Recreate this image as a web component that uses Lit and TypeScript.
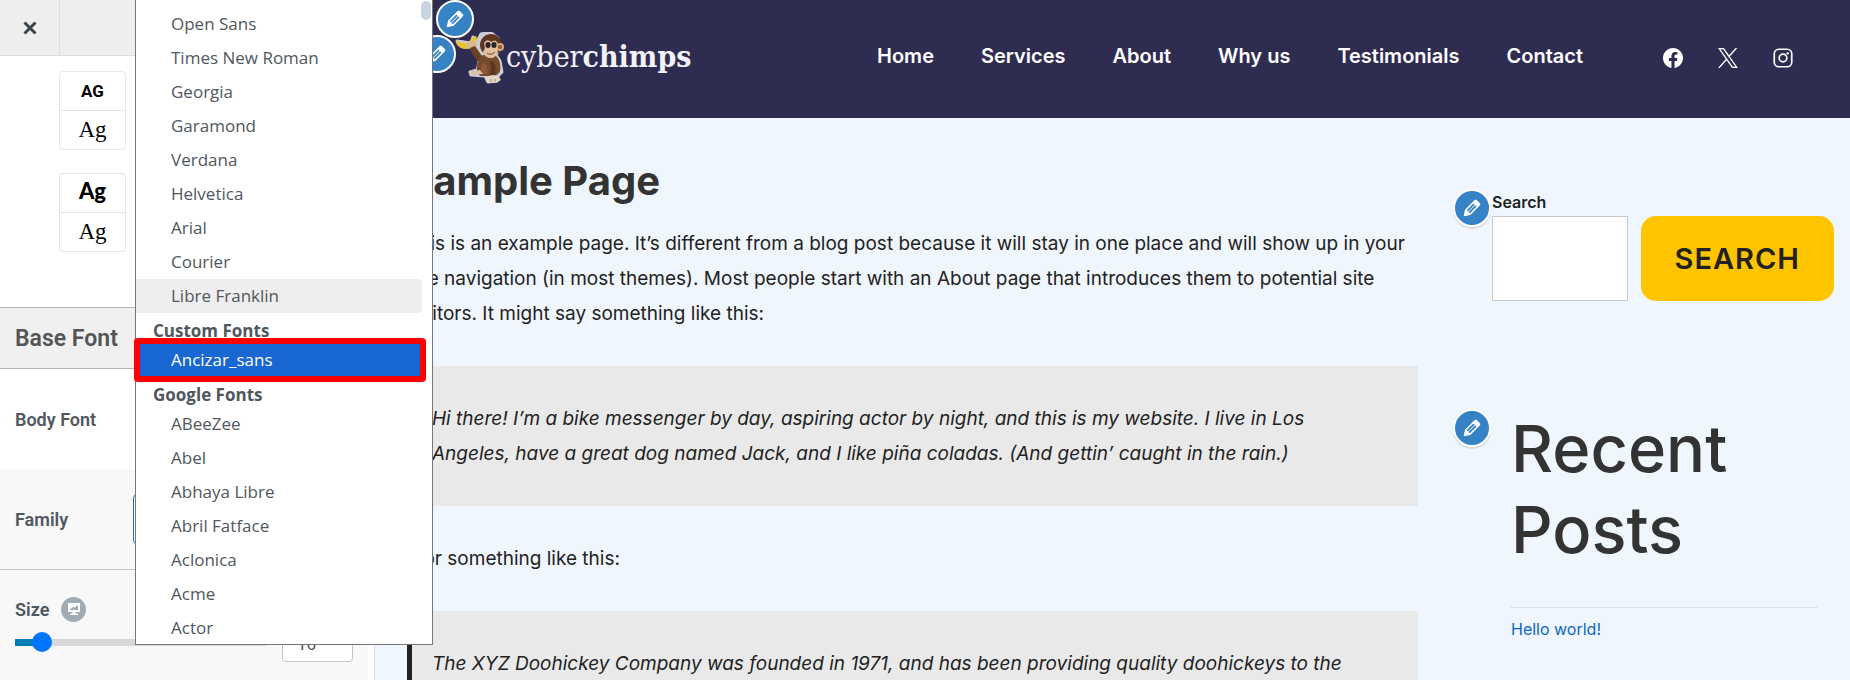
import { LitElement, html, css, svg } from "lit";
import { customElement, property, state } from "lit/decorators.js";

const SYSTEM_FONTS = ["Open Sans", "Times New Roman", "Georgia", "Garamond", "Verdana", "Helvetica", "Arial", "Courier", "Libre Franklin"];
const CUSTOM_FONTS = ["Ancizar_sans"];
const GOOGLE_FONTS = ["ABeeZee", "Abel", "Abhaya Libre", "Abril Fatface", "Aclonica", "Acme", "Actor"];
const CURRENT_FONT = "Libre Franklin";
const MENU = ["Home", "Services", "About", "Why us", "Testimonials", "Contact"];

const SOCIAL = [
  {
    name: "Facebook",
    shape: svg`<path d="M24 12.073c0-6.627-5.373-12-12-12s-12 5.373-12 12c0 5.99 4.388 10.954 10.125 11.854v-8.385H7.078v-3.47h3.047V9.43c0-3.007 1.792-4.669 4.533-4.669 1.312 0 2.686.235 2.686.235v2.953H15.83c-1.491 0-1.956.925-1.956 1.874v2.25h3.328l-.532 3.47h-2.796v8.385C19.612 23.027 24 18.062 24 12.073z"/>`,
  },
  {
    name: "X",
    shape: svg`<path d="M14.258 10.152 23.176 0h-2.113l-7.747 8.813L7.133 0H0l9.352 13.328L0 23.973h2.113l8.176-9.309 6.531 9.309h7.133zm-2.895 3.293-.949-1.328L2.875 1.56h3.246l6.086 8.523.945 1.328 7.91 11.078h-3.246z"/>`,
  },
  {
    name: "Instagram",
    shape: svg`<g fill="none" stroke="currentColor" stroke-width="2"><rect x="1.5" y="1.5" width="21" height="21" rx="5.5"/><circle cx="12" cy="12" r="4.6"/></g><circle cx="17.6" cy="6.4" r="1.4"/>`,
  },
];

@customElement("edit-shortcut")
class EditShortcut extends LitElement {
  @property() label = "";

  static styles = css`
    :host { display: block; }
    .shortcut {
      display: grid;
      place-items: center;
      box-sizing: border-box;
      width: 38px;
      height: 38px;
      padding: 0;
      border: 2px solid #fff;
      border-radius: 50%;
      background: #3582c4;
      color: #fff;
      box-shadow: 0 2px 1px rgba(46, 68, 83, 0.15);
      cursor: pointer;
    }
    .pen { display: block; width: 24px; height: 24px; fill: currentColor; }
  `;

  render() {
    return html`<button class="shortcut" type="button" aria-label=${this.label}>
      <svg class="pen" viewBox="0 0 20 20" aria-hidden="true">
        <path d="M13.89 3.39l2.71 2.72c.46.46.42 1.24.03 1.64l-8.01 8.02-5.56 1.16 1.16-5.58s7.6-7.63 7.99-8.03c.39-.39 1.22-.39 1.68.07zm-2.73 2.79l-5.59 5.61 1.11 1.11 5.54-5.65zm-2.97 8.23l5.58-5.6-1.07-1.08-5.59 5.6z"/>
      </svg>
    </button>`;
  }
}

@customElement("font-menu")
class FontMenu extends LitElement {
  @property() value = "";

  static styles = css`
    :host {
      display: block;
      box-sizing: border-box;
      border: 1px solid #767676;
      border-top: 0;
      background: #fff;
    }
    .list {
      display: block;
      box-sizing: border-box;
      width: 100%;
      height: 644px;
      margin: 0;
      padding: 7px 10px 0 0;
      border: 0;
      outline: 0;
      overflow: hidden;
      background: #fff;
      color: #50575e;
      font: 17px "Open Sans", "Noto Sans", sans-serif;
    }
    .group {
      padding: 6px 0 0;
      font: bold 17px "Open Sans", "Noto Sans", sans-serif;
      text-indent: 15px;
    }
    .font {
      box-sizing: border-box;
      height: 34px;
      min-height: 34px;
      padding: 5px 0 0 35px;
      font: 400 17px "Open Sans", "Noto Sans", sans-serif;
      text-indent: 0;
    }
    .current { background: #eee; }
    .font:checked {
      background: #1967d2 linear-gradient(#1967d2, #1967d2);
      color: #fff;
      -webkit-text-fill-color: #fff;
    }
    .thumb {
      position: absolute;
      top: 1px;
      right: 1px;
      width: 10px;
      height: 19px;
      border-radius: 5px;
      background: #c9d4de;
    }
    .marker {
      position: absolute;
      top: 338px;
      left: -2px;
      right: 6px;
      box-sizing: border-box;
      height: 44px;
      border: 6px solid #f00;
      border-radius: 4px;
      pointer-events: none;
    }
  `;

  private option(name: string) {
    return html`<option class="font ${name === CURRENT_FONT ? "current" : ""}" ?selected=${name === this.value}>${name}</option>`;
  }

  render() {
    return html`
      <select class="list" size="20" aria-label="Font family options">
        ${SYSTEM_FONTS.map((f) => this.option(f))}
        <optgroup class="group" label="Custom Fonts">${CUSTOM_FONTS.map((f) => this.option(f))}</optgroup>
        <optgroup class="group" label="Google Fonts">${GOOGLE_FONTS.map((f) => this.option(f))}</optgroup>
      </select>
      <div class="thumb"></div>
      <div class="marker"></div>
    `;
  }
}

@customElement("customizer-panel")
class CustomizerPanel extends LitElement {
  @state() private size = 16;
  private readonly min = 12;
  private readonly max = 66;

  static styles = css`
    :host {
      display: block;
      box-sizing: border-box;
      border-right: 1px solid #dcdcde;
      padding-right: 6px;
      background: #fff;
      color: #50575e;
      font-family: Roboto, sans-serif;
    }
    .bar {
      display: flex;
      box-sizing: border-box;
      height: 56px;
      margin-right: -6px;
      border-bottom: 1px solid #dcdcde;
      background: #eee;
    }
    .close {
      display: grid;
      place-items: center;
      box-sizing: border-box;
      width: 60px;
      padding: 0;
      border: 0;
      border-right: 1px solid #dcdcde;
      background: none;
      color: #3c434a;
      cursor: pointer;
    }
    .cross { width: 14px; height: 14px; stroke: currentColor; stroke-width: 3; }
    .presets {
      display: flex;
      flex-direction: column;
      gap: 23px;
      box-sizing: border-box;
      height: 251px;
      padding: 15px 0 0 59px;
    }
    .preset {
      display: flex;
      flex-direction: column;
      box-sizing: border-box;
      width: 67px;
      height: 79px;
      padding: 0;
      border: 1px solid #e5e5e5;
      border-radius: 4px;
      background: #fff;
      color: #000;
      cursor: pointer;
    }
    .sample { display: block; width: 100%; flex: 1; font-size: 20px; line-height: 38px; }
    .sample + .sample { border-top: 1px solid #e5e5e5; }
    .narrow { font-family: Roboto, sans-serif; font-size: 17px; font-weight: 700; }
    .round { font-family: Lato, sans-serif; font-size: 22px; line-height: 34px; font-weight: 900; }
    .serif { font-family: "Liberation Serif", serif; font-size: 23px; }
    .section {
      display: flex;
      align-items: center;
      box-sizing: border-box;
      height: 62px;
      margin: 0;
      padding-left: 15px;
      border: solid #b4b4b4;
      border-width: 1px 0;
      background: #f0f0f0;
      color: #555;
      font-size: 23px;
      font-weight: 600;
    }
    .row {
      display: flex;
      align-items: center;
      box-sizing: border-box;
      height: 100px;
      padding: 0 15px;
      font-size: 18px;
      font-weight: 600;
    }
    .family { height: 101px; border-bottom: 1px solid #c3c4c7; background: #f8f8f8; }
    .name { width: 118px; }
    .picker {
      flex: 1;
      min-width: 0;
      height: 50px;
      padding: 0 12px;
      border: 1px solid #2271b1;
      border-radius: 4px;
      background: #fff;
      color: #50575e;
      font: 16px Roboto, sans-serif;
    }
    .sizes {
      display: flex;
      flex-direction: column;
      box-sizing: border-box;
      height: 300px;
      padding: 26px 15px;
      background: #f8f8f8;
      font-size: 18px;
      font-weight: 600;
    }
    .head { display: flex; align-items: center; gap: 12px; height: 26px; }
    .device {
      display: grid;
      place-items: center;
      width: 25px;
      height: 25px;
      padding: 0;
      border: 0;
      border-radius: 50%;
      background: #a0abb3;
      color: #fff;
      cursor: pointer;
    }
    .screen { width: 14px; height: 14px; }
    .control { display: flex; align-items: center; gap: 16px; height: 36px; margin-top: 4px; }
    .slider {
      flex: 1;
      min-width: 0;
      height: 20px;
      margin: 0 0 4px;
      appearance: none;
      background: linear-gradient(#007cba, #007cba) left center / var(--fill) 7px no-repeat,
        linear-gradient(#d7d7d7, #d7d7d7) left center / 100% 7px no-repeat;
    }
    .slider::-webkit-slider-thumb {
      appearance: none;
      width: 20px;
      height: 20px;
      border-radius: 50%;
      background: #0075ff;
    }
    .number {
      box-sizing: border-box;
      width: 71px;
      height: 36px;
      padding: 0 14px;
      border: 1px solid #c3c4c7;
      border-radius: 4px;
      background: #fff;
      color: #50575e;
      font: 17px Roboto, sans-serif;
    }
    .number::-webkit-inner-spin-button { display: none; }
  `;

  private resize(e: Event) {
    this.size = Number((e.target as HTMLInputElement).value);
  }

  render() {
    const fill = ((this.size - this.min) / (this.max - this.min)) * 100;
    return html`
      <div class="bar">
        <button class="close" type="button" aria-label="Close">
          <svg class="cross" viewBox="0 0 14 14" aria-hidden="true"><path d="M1.5 1.5l11 11M12.5 1.5l-11 11"/></svg>
        </button>
      </div>
      <div class="presets">
        <button class="preset" type="button"><span class="sample narrow">AG</span><span class="sample serif">Ag</span></button>
        <button class="preset" type="button"><span class="sample round">Ag</span><span class="sample serif">Ag</span></button>
      </div>
      <h2 class="section">Base Font</h2>
      <div class="row">Body Font</div>
      <div class="row family">
        <label class="name" for="family">Family</label>
        <select class="picker" id="family"><option>${CURRENT_FONT}</option></select>
      </div>
      <div class="sizes">
        <div class="head">
          <label for="size">Size</label>
          <button class="device" type="button" aria-label="Desktop">
            <svg class="screen" viewBox="0 0 14 14" aria-hidden="true">
              <path fill="#fff" d="M1 1h12v9H8.5v1.5H11V13H3v-1.5h2.500V10H1z"/>
              <path fill="#a0abb3" d="M3 7.500l3-2.500 2 .5L11 3v5H3z"/>
            </svg>
          </button>
        </div>
        <div class="control">
          <input class="slider" id="size" type="range" min=${this.min} max=${this.max} .value=${String(this.size)}
            style="--fill: ${fill}%" @input=${this.resize} />
          <input class="number" type="number" aria-label="Size in pixels" .value=${String(this.size)} @input=${this.resize} />
        </div>
      </div>
    `;
  }
}

@customElement("site-preview")
class SitePreview extends LitElement {
  static styles = css`
    :host {
      display: block;
      position: relative;
      overflow: hidden;
      background: #f0f6fd;
      color: #222;
      font: 19px/35px Inter, "Liberation Sans", sans-serif;
    }
    .header {
      display: flex;
      align-items: flex-start;
      box-sizing: border-box;
      height: 118px;
      padding: 32px 57px 0 80px;
      background: #2f2c52;
      color: #fff;
    }
    .brand { display: flex; align-items: flex-start; gap: 1px; color: #f1f1f6; text-decoration: none; }
    .chimp { width: 50px; height: 52px; }
    .word { font: 30px/50px "DejaVu Serif Condensed", "DejaVu Serif", serif; }
    .strong { font-weight: 700; }
    .menu { display: flex; gap: 47px; margin-left: auto; line-height: 48px; }
    .item { color: #fff; font-size: 20px; font-weight: 600; text-decoration: none; }
    .social { display: flex; gap: 35px; margin-left: 80px; padding-top: 16px; }
    .network { display: block; color: #fff; }
    .glyph { display: block; width: 20px; height: 20px; fill: currentColor; }
    .body {
      display: grid;
      grid-template-columns: minmax(0, 1fr) 342px;
      gap: 74px;
      padding: 39px 16px 0 32px;
    }
    .title { margin: 0 0 21px; color: #333; font-size: 40px; line-height: 48px; font-weight: 700; }
    .text { margin: 0 0 35px; }
    .quote {
      margin: 0 0 35px;
      padding: 35px 40px 35px 20px;
      border-left: 5px solid #222;
      background: #e9e9e9;
      font-style: italic;
    }
    .widget { position: relative; }
    .edit { position: absolute; z-index: 1; }
    .edit-menu { left: 61px; top: 0; }
    .edit-logo { left: 43px; top: 35px; }
    .search { display: grid; grid-template-columns: minmax(0, 1fr) auto; column-gap: 13px; padding-top: 32px; }
    .caption { grid-column: 1 / -1; color: #222; font-size: 16px; line-height: 27px; font-weight: 600; }
    .query {
      box-sizing: border-box;
      min-width: 0;
      width: 100%;
      height: 85px;
      padding: 0 12px;
      border: 1px solid #c8c8c8;
      background: #fff;
      font: inherit;
    }
    .submit {
      height: 85px;
      padding: 0 34px;
      border: 0;
      border-radius: 15px;
      background: #ffc400;
      color: #222;
      font: 600 29px Inter, "Liberation Sans", sans-serif;
      letter-spacing: 1px;
      cursor: pointer;
    }
    .posts { margin: 107px 17px 0 19px; }
    .edit-posts { left: -58px; top: 1px; }
    .heading { margin: 0; color: #333; font-size: 65px; line-height: 81px; font-weight: 500; }
    .entries { margin: 37px 0 0; padding: 4px 0 0; border-top: 1px dotted #cdd2d8; list-style: none; font-size: 16px; }
    .entry { color: #0a66c2; text-decoration: none; }
    .edit-search { left: -39px; top: 32px; }
  `;

  render() {
    return html`
      <edit-shortcut class="edit edit-menu" label="Edit menu"></edit-shortcut>
      <edit-shortcut class="edit edit-logo" label="Edit site logo"></edit-shortcut>
      <header class="header">
        <a class="brand" href="#home">
          <svg class="chimp" viewBox="0 0 50 52" aria-hidden="true">
            <g stroke="#cfcbd6" stroke-width="3" stroke-linejoin="round" fill="#cfcbd6">
              <path d="M2 9q2 7 11 6l6-1 6 12-3 12-7 2 1 3 14 1 3 6 9-1 1-5 4-4-2-11-4-6 4-7-2-10-8-6-9 2-4 8-4-5-2 6z"/>
            </g>
            <path d="M1 8q5 4 11 3l8-7 2 1-3 8-8 4Q3 17 1 8z" fill="#e9c51d"/>
            <path d="M11 11l5-3 5 2 1 4-7 3-4-1z" fill="#d9b98a"/>
            <path d="M15 16l5-2 7 10 4-1-2 8-6-2q-6-6-8-13z" fill="#6b4126"/>
            <path d="M28 23q-8 8-6 16l3 5h15q7-3 5-12-1-7-6-9z" fill="#774a2b"/>
            <path d="M29 30q-5 5-2 12h5q2-7-3-12z" fill="#8c5a36"/>
            <ellipse cx="36" cy="13" rx="11" ry="11" fill="#5c3620"/>
            <circle cx="45" cy="15" r="4" fill="#d4a878"/>
            <circle cx="45" cy="15" r="2" fill="#8c5a36"/>
            <path d="M29 11q3-5 7-1 5-4 7 2l-1 4 1 5q-3 5-7 5-6 0-8-6l2-4z" fill="#e0c19c"/>
            <ellipse cx="33" cy="13" rx="2.6" ry="3" fill="#2a2328"/>
            <ellipse cx="39" cy="13" rx="2.6" ry="3" fill="#2a2328"/>
            <path d="M32 21q4 3 8-1" fill="none" stroke="#754b31"/>
            <path d="M17 39l8-1 3 4-11 1q-3-2 0-4z" fill="#d8c3a3"/>
            <path d="M38 29q5 7 1 16h-5q3-8 1-15z" fill="#5c3620"/>
            <path d="M32 45q6-4 12 0l2 3-5 3h-7q-5-2-2-6z" fill="#e3d7c4"/>
            <path d="M36 47v3M40 47v3" stroke="#a18c73"/>
          </svg>
          <span class="word">cyber<span class="strong">chimps</span></span>
        </a>
        <nav class="menu">${MENU.map((m) => html`<a class="item" href="#">${m}</a>`)}</nav>
        <div class="social">
          ${SOCIAL.map((s) => html`<a class="network" href="#" aria-label=${s.name}><svg class="glyph" viewBox="0 0 24 24" aria-hidden="true">${s.shape}</svg></a>`)}
        </div>
      </header>
      <div class="body">
        <main>
          <h1 class="title">Sample Page</h1>
          <p class="text">This is an example page. It’s different from a blog post because it will stay in one place and will show up in your site navigation (in most themes). Most people start with an About page that introduces them to potential site visitors. It might say something like this:</p>
          <blockquote class="quote">Hi there! I’m a bike messenger by day, aspiring actor by night, and this is my website. I live in Los Angeles, have a great dog named Jack, and I like piña coladas. (And gettin’ caught in the rain.)</blockquote>
          <p class="text">…or something like this:</p>
          <blockquote class="quote">The XYZ Doohickey Company was founded in 1971, and has been providing quality doohickeys to the</blockquote>
        </main>
        <aside>
          <form class="widget search" @submit=${(e: Event) => e.preventDefault()}>
            <edit-shortcut class="edit edit-search" label="Edit search widget"></edit-shortcut>
            <label class="caption" for="q">Search</label>
            <input class="query" id="q" type="search" />
            <button class="submit" type="submit">SEARCH</button>
          </form>
          <section class="widget posts">
            <edit-shortcut class="edit edit-posts" label="Edit recent posts widget"></edit-shortcut>
            <h2 class="heading">Recent Posts</h2>
            <ul class="entries"><li><a class="entry" href="#hello">Hello world!</a></li></ul>
          </section>
        </aside>
      </div>
    `;
  }
}

@customElement("app-root")
class AppRoot extends LitElement {
  static styles = css`
    :host {
      display: grid;
      grid-template-columns: 375px minmax(0, 1fr);
      position: relative;
      height: 100vh;
      overflow: hidden;
    }
    .pane { min-height: 0; overflow: hidden; }
    .menu { position: absolute; z-index: 2; top: 0; left: 135px; width: 298px; }
  `;

  render() {
    return html`
      <customizer-panel class="pane"></customizer-panel>
      <site-preview class="pane"></site-preview>
      <font-menu class="menu" value="Ancizar_sans"></font-menu>
    `;
  }
}
